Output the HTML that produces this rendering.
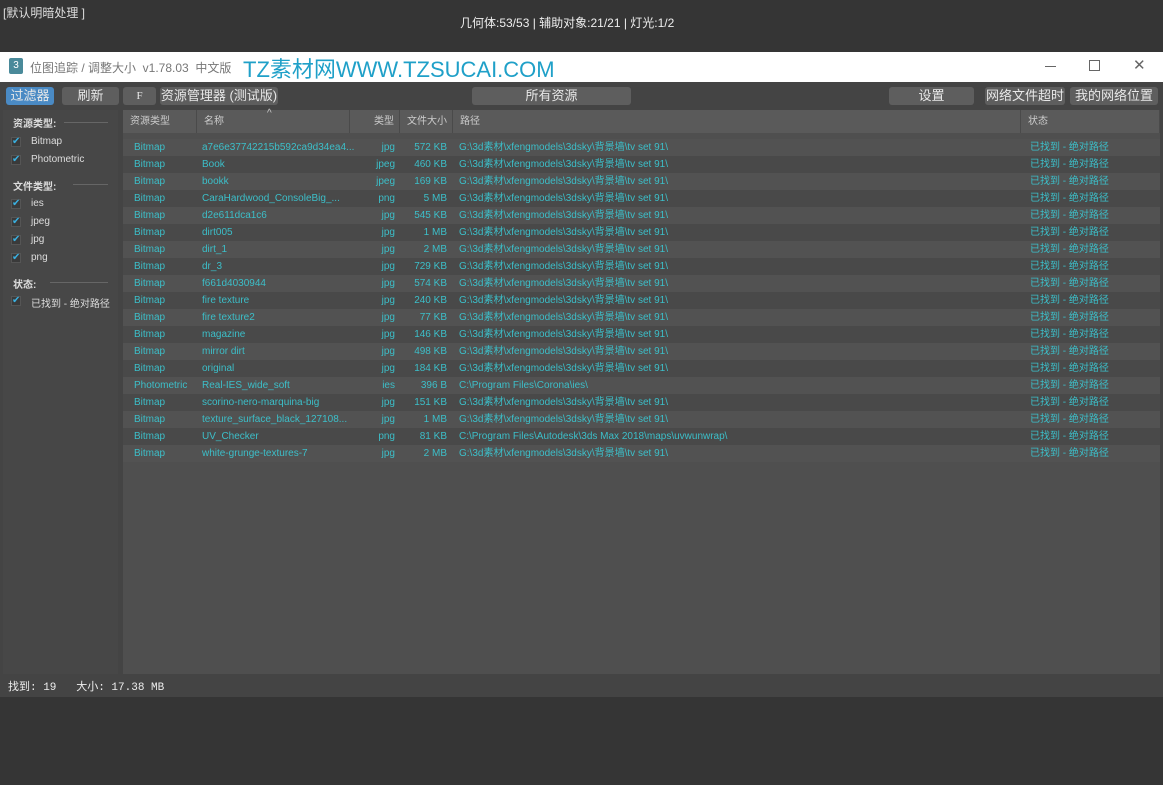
<!DOCTYPE html><html><head><meta charset="utf-8"><style>
*{margin:0;padding:0;box-sizing:border-box}
body{width:1163px;height:785px;background:#353535;font-family:"Liberation Sans","Noto Sans CJK SC",sans-serif;position:relative;overflow:hidden;color:#ddd}
.a{position:absolute;white-space:nowrap}
.btn{position:absolute;top:87px;height:18px;background:#5e5e5e;border-radius:3px;color:#e8e8e8;font-size:13px;line-height:18px;text-align:center}
.row{position:absolute;left:123px;width:1037px;height:17px;font-size:10px;line-height:17px;color:#3cbfc9}
.row span{position:absolute}
.h{position:absolute;top:110px;height:23px;background:#5a5a5a;border-right:1px solid #4a4a4a;font-size:10px;line-height:23px;color:#ccc;padding-left:7px}
.cb{position:absolute;left:11px;width:10px;height:10px;background:#3a3a3a;border:1px solid #555;color:#3ab0e0;font-size:10px;line-height:8px}
.lt{position:absolute;left:31px;font-size:10px;color:#ddd}
</style></head><body>
<div class="a" style="left:3px;top:4px;font-size:12px;color:#ddd">[默认明暗处理 ]</div>
<div class="a" style="left:460px;top:14px;font-size:12px;color:#eee">几何体:53/53 | 辅助对象:21/21 | 灯光:1/2</div>
<div class="a" style="left:0;top:52px;width:1163px;height:30px;background:#fff"></div>
<div class="a" style="left:9px;top:58px;width:14px;height:16px;background:#4a8a9a;border-radius:2px;color:#fff;font-size:10px;text-align:center;line-height:16px">3</div>
<div class="a" style="left:30px;top:59px;font-size:12px;color:#777">位图追踪 / 调整大小 &nbsp;v1.78.03 &nbsp;中文版</div>
<div class="a" style="left:243px;top:56px;font-size:22px;color:#1fa0c8;line-height:28px">TZ素材网WWW.TZSUCAI.COM</div>
<div class="a" style="left:1045px;top:66px;width:11px;height:1px;background:#666"></div>
<div class="a" style="left:1089px;top:60px;width:11px;height:11px;border:1px solid #666"></div>
<div class="a" style="left:1133px;top:56px;font-size:15px;color:#666">✕</div>
<div class="a" style="left:0;top:82px;width:1163px;height:615px;background:#444"></div>
<div class="btn" style="left:6px;width:48px;background:#4a8ac4">过滤器</div>
<div class="btn" style="left:62px;width:57px">刷新</div>
<div class="btn" style="left:123px;width:33px;font-size:11px;font-family:'Liberation Serif',serif">F</div>
<div class="btn" style="left:160px;width:118px">资源管理器 (测试版)</div>
<div class="btn" style="left:472px;width:159px">所有资源</div>
<div class="btn" style="left:889px;width:85px">设置</div>
<div class="btn" style="left:985px;width:80px">网络文件超时</div>
<div class="btn" style="left:1070px;width:88px">我的网络位置</div>
<div class="a" style="left:3px;top:110px;width:115px;height:564px;background:#474747"></div>
<div class="a" style="left:13px;top:115px;font-size:10px;font-weight:bold;color:#ddd">资源类型:</div><div class="a" style="left:64px;top:122px;width:44px;height:1px;background:#666"></div>
<div class="cb" style="top:137px">✔</div><div class="lt" style="top:136px">Bitmap</div>
<div class="cb" style="top:155px">✔</div><div class="lt" style="top:154px">Photometric</div>
<div class="a" style="left:13px;top:178px;font-size:10px;font-weight:bold;color:#ddd">文件类型:</div><div class="a" style="left:73px;top:184px;width:35px;height:1px;background:#666"></div>
<div class="cb" style="top:199px">✔</div><div class="lt" style="top:198px">ies</div>
<div class="cb" style="top:217px">✔</div><div class="lt" style="top:216px">jpeg</div>
<div class="cb" style="top:235px">✔</div><div class="lt" style="top:234px">jpg</div>
<div class="cb" style="top:253px">✔</div><div class="lt" style="top:252px">png</div>
<div class="a" style="left:13px;top:276px;font-size:10px;font-weight:bold;color:#ddd">状态:</div><div class="a" style="left:50px;top:282px;width:58px;height:1px;background:#666"></div>
<div class="cb" style="top:296px">✔</div><div class="lt" style="top:295px">已找到 - 绝对路径</div>
<div class="a" style="left:123px;top:110px;width:1037px;height:564px;background:#4f4f4f"></div>
<div class="h" style="left:123px;width:74px">资源类型</div>
<div class="h" style="left:197px;width:153px">名称</div>
<div class="a" style="left:267px;top:108px;font-size:10px;color:#ccc">^</div>
<div class="h" style="left:350px;width:50px;text-align:right;padding-right:5px">类型</div>
<div class="h" style="left:400px;width:53px">文件大小</div>
<div class="h" style="left:453px;width:568px">路径</div>
<div class="h" style="left:1021px;width:139px">状态</div>
<div id="rows"></div>
<div class="a" style="left:8px;top:678px;font-size:11px;font-family:'Liberation Mono','Noto Sans CJK SC',monospace;color:#eee">找到: 19 &nbsp;&nbsp;大小: 17.38 MB</div>
<script>
var G="G:\\3d素材\\xfengmodels\\3dsky\\背景墙\\tv set 91\\";
var d=[["Bitmap","a7e6e37742215b592ca9d34ea4...","jpg","572 KB",G],["Bitmap","Book","jpeg","460 KB",G],["Bitmap","bookk","jpeg","169 KB",G],["Bitmap","CaraHardwood_ConsoleBig_...","png","5 MB",G],["Bitmap","d2e611dca1c6","jpg","545 KB",G],["Bitmap","dirt005","jpg","1 MB",G],["Bitmap","dirt_1","jpg","2 MB",G],["Bitmap","dr_3","jpg","729 KB",G],["Bitmap","f661d4030944","jpg","574 KB",G],["Bitmap","fire texture","jpg","240 KB",G],["Bitmap","fire texture2","jpg","77 KB",G],["Bitmap","magazine","jpg","146 KB",G],["Bitmap","mirror dirt","jpg","498 KB",G],["Bitmap","original","jpg","184 KB",G],["Photometric","Real-IES_wide_soft","ies","396 B","C:\\Program Files\\Corona\\ies\\"],["Bitmap","scorino-nero-marquina-big","jpg","151 KB",G],["Bitmap","texture_surface_black_127108...","jpg","1 MB",G],["Bitmap","UV_Checker","png","81 KB","C:\\Program Files\\Autodesk\\3ds Max 2018\\maps\\uvwunwrap\\"],["Bitmap","white-grunge-textures-7","jpg","2 MB",G]];
var h="";d.forEach(function(r,i){var t=139+17*i;h+='<div class="row" style="top:'+t+'px;background:'+(i%2?'#494949':'#525252')+'"><span style="left:11px">'+r[0]+'</span><span style="left:79px">'+r[1]+'</span><span style="right:765px">'+r[2]+'</span><span style="right:713px">'+r[3]+'</span><span style="left:336px">'+r[4]+'</span><span style="left:907px">已找到 - 绝对路径</span></div>'});
document.getElementById("rows").innerHTML=h;
</script>
</body></html>
